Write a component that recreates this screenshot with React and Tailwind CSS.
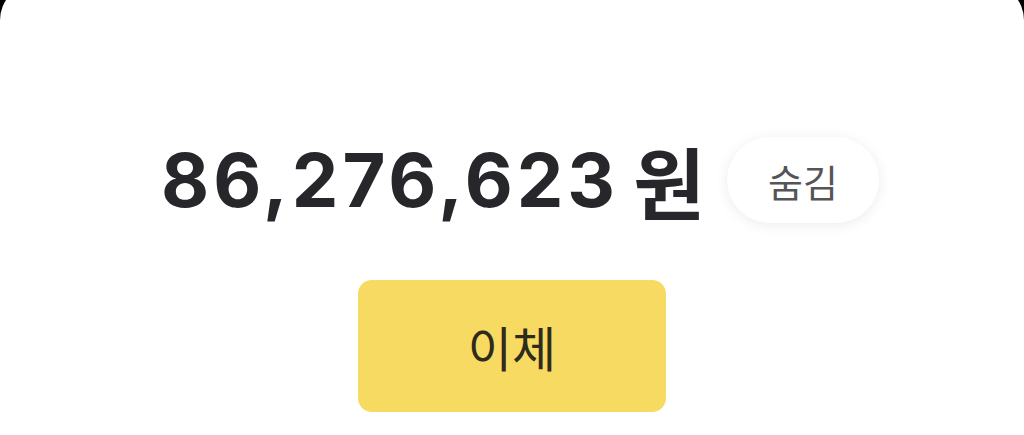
export default function App() {
    return (
        <div className="h-[435px] w-full overflow-hidden bg-black font-['Noto_Sans_CJK_KR',sans-serif]">
            <div className="-mt-4 flex h-[451px] flex-col items-center rounded-t-[36px] bg-white pt-[153px]">
                {/* balance row */}
                <div className="ml-[16px] flex h-[86px] items-center">
                    <span className="font-['Inter','Noto_Sans_CJK_KR',sans-serif] text-[74px] font-bold leading-none tracking-[4px] text-[#27272b]">
                        86,276,623
                    </span>
                    <span className="ml-[14px] text-[78px] font-bold leading-none text-[#27272b]">
                        원
                    </span>
                    <button className="ml-[22px] flex h-[86px] w-[152px] items-center justify-center rounded-full bg-white text-[38px] text-[#555558] shadow-[0_2px_14px_rgba(0,0,0,0.08)]">
                        숨김
                    </button>
                </div>

                {/* transfer */}
                <button className="mt-[57px] flex h-[132px] w-[308px] items-center justify-center rounded-[14px] bg-[#f7da62] text-[48px] text-[#2e2a1c]">
                    이체
                </button>
            </div>
        </div>
    );
}
